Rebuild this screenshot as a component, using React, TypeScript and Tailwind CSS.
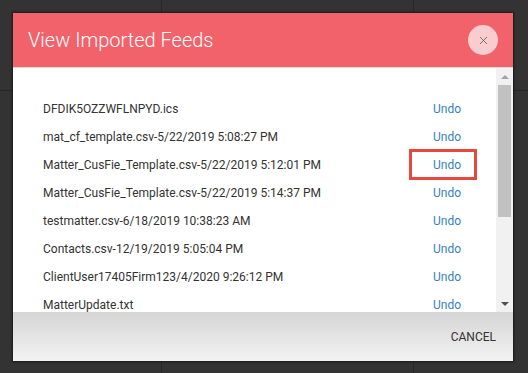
import { X } from 'lucide-react';

const FEEDS = [
  'DFDIK5OZZWFLNPYD.ics',
  'mat_cf_template.csv-5/22/2019 5:08:27 PM',
  'Matter_CusFie_Template.csv-5/22/2019 5:12:01 PM',
  'Matter_CusFie_Template.csv-5/22/2019 5:14:37 PM',
  'testmatter.csv-6/18/2019 10:38:23 AM',
  'Contacts.csv-12/19/2019 5:05:04 PM',
  'ClientUser17405Firm123/4/2020 9:26:12 PM',
  'MatterUpdate.txt',
  'Contacts.csv-1/8/2021 11:02:45 AM',
  'MatterImport.csv-2/3/2021 3:17:09 PM',
  'Tasks.csv-2/3/2021 3:20:51 PM',
];

function Backdrop() {
  return (
    <div className="absolute inset-0 grid grid-cols-[162px_252px_1fr] grid-rows-[91px_1fr] bg-[#333]">
      <div className="border-r border-b border-[#282828]" />
      <div className="border-r border-b border-[#282828]" />
      <div className="border-b border-[#282828]" />
      <div className="border-r border-[#282828]" />
      <div className="border-r border-[#282828]" />
      <div />
    </div>
  );
}

function Scrollbar() {
  return (
    <div className="w-[17px] shrink-0 bg-[#f1f1f1] flex flex-col">
      <div className="h-[17px] flex items-center justify-center">
        <div className="w-0 h-0 border-x-[4px] border-x-transparent border-b-[4px] border-b-[#a3a3a3]" />
      </div>
      <div className="mx-[2px] h-[132px] bg-[#c1c1c1]" />
      <div className="flex-1" />
      <div className="h-[17px] flex items-center justify-center">
        <div className="w-0 h-0 border-x-[4px] border-x-transparent border-t-[4px] border-t-[#505050]" />
      </div>
    </div>
  );
}

export default function App() {
  return (
    <div className="relative w-[528px] h-[373px] overflow-hidden font-['Roboto','Liberation_Sans',sans-serif]">
      <Backdrop />

      {/* ── Modal ── */}
      <div className="absolute left-[13px] top-[13px] w-[500px] h-[348px] flex flex-col bg-white shadow-[0_0_2px_1px_rgba(0,0,0,0.55)]">
        <div className="h-[55px] shrink-0 flex items-center justify-between pl-[15px] pr-[15px] bg-[#f2626b] border-b border-[#d9d9d9]">
          <h1 className="text-[20px] leading-none font-light text-white">View Imported Feeds</h1>
          <button className="w-[30px] h-[30px] rounded-full bg-[#f9ccd0] flex items-center justify-center">
            <X className="w-[13px] h-[13px] text-[#5e5052]" strokeWidth={1.4} />
          </button>
        </div>

        <div className="flex-1 min-h-0 flex">
          <div className="flex-1 overflow-hidden pt-[27px]">
            {FEEDS.map((name, i) => (
              <div key={i} className="h-[28px] flex items-center pl-[30px] text-[12px] leading-[16px] text-[#333]">
                <span className="flex-1 whitespace-nowrap">{name}</span>
                <span className="relative w-[63px] text-[#3383c0]">
                  Undo
                  {i === 2 && (
                    <span className="absolute left-[-24px] top-[-8px] w-[68px] h-[31px] border-[3px] border-[#e8473f]" />
                  )}
                </span>
              </div>
            ))}
          </div>
          <Scrollbar />
        </div>

        <div className="h-[49px] shrink-0 flex items-center justify-end pr-[17px] bg-gradient-to-b from-[#d5d5d5] to-[#f3f3f3]">
          <button className="text-[12px] leading-[16px] text-[#333] uppercase">Cancel</button>
        </div>
      </div>
    </div>
  );
}
